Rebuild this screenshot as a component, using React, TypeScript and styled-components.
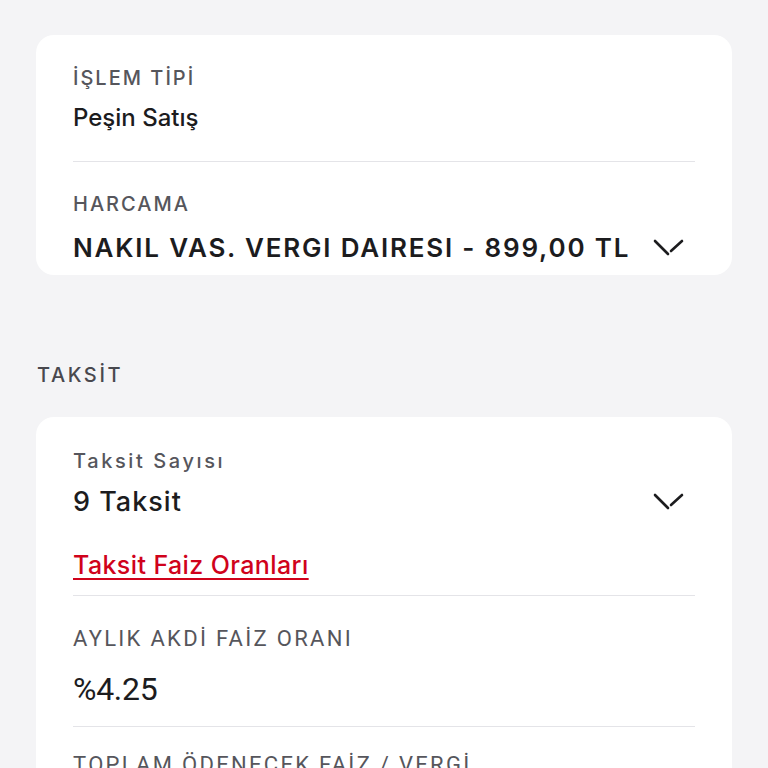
import styled, { createGlobalStyle } from "styled-components"

const GlobalStyle = createGlobalStyle`
  html, body { margin: 0; padding: 0; background: #f4f4f6; }
  body { font-family: Inter, "Open Sans", sans-serif; color: #1c1c1e; }
`

// Styles
const Page = styled.div`
  padding: 35px 36px 0;
  height: 768px;
  box-sizing: border-box;
  overflow: hidden;
`
const Card = styled.div`
  background: #fff;
  border-radius: 18px;
  padding: 0 37px;
`
const Field = styled.div<{ $pad: string }>`
  padding: ${p => p.$pad};
`
const Label = styled.div<{ $spacing?: number }>`
  font-size: 20px;
  line-height: 24px;
  font-weight: 500;
  color: #56565c;
  letter-spacing: ${p => p.$spacing ?? 2}px;
`
const NumLabel = styled.div`
  font-family: Roboto, sans-serif;
  font-size: 22px;
  line-height: 26px;
  color: #56565c;
  letter-spacing: 2.3px;
`
const ValueRow = styled.div<{ $gap: number }>`
  display: flex;
  align-items: center;
  justify-content: space-between;
  margin-top: ${p => p.$gap}px;
`
const Value = styled.div<{ $size: number; $weight?: number; $spacing?: number }>`
  font-size: ${p => p.$size}px;
  line-height: ${p => p.$size + 6}px;
  font-weight: ${p => p.$weight ?? 500};
  letter-spacing: ${p => p.$spacing ?? 0}px;
  color: #1c1c1e;
  white-space: nowrap;
`
const NumValue = styled.div`
  font-family: Roboto, sans-serif;
  font-size: 32px;
  line-height: 36px;
  letter-spacing: -0.3px;
  color: #1c1c1e;
  margin-top: 19px;
`
const Divider = styled.hr`
  border: none;
  border-top: 1.5px solid #e4e4e8;
  margin: 0;
`
const Section = styled.div`
  font-size: 20px;
  line-height: 24px;
  font-weight: 500;
  letter-spacing: 2.6px;
  color: #48484e;
  margin-left: 1px;
  padding: 88px 0 30px;
`
const Link = styled.a`
  display: block;
  width: max-content;
  margin-top: 32px;
  font-size: 25px;
  line-height: 30px;
  font-weight: 500;
  letter-spacing: 0.4px;
  color: #d0021b;
  text-decoration: underline;
  text-underline-offset: 4px;
  text-decoration-thickness: 2px;
`
const Chevron = styled.svg`
  flex: none;
  margin-right: 10px;
`

const ChevronDown = () => (
  <Chevron width="32" height="18" viewBox="0 0 32 18">
    <g stroke="#1c1c1e" strokeWidth="2.6" strokeLinecap="round" fill="none">
      <line x1="2" y1="2" x2="15" y2="15" />
      <line x1="18" y1="12" x2="29" y2="2" />
    </g>
  </Chevron>
)

const App: React.FC = () => {
  return (
    <>
      <GlobalStyle />
      <Page>
        <Card>
          <Field $pad="31px 0 28px">
            <Label>İŞLEM TİPİ</Label>
            <ValueRow $gap={13}><Value $size={24} $weight={550}>Peşin Satış</Value></ValueRow>
          </Field>
          <Divider />
          <Field $pad="30px 0 11px">
            <Label>HARCAMA</Label>
            <ValueRow $gap={16}>
              <Value $size={26} $weight={580} $spacing={1.8}>NAKIL VAS. VERGI DAIRESI - 899,00 TL</Value>
              <ChevronDown />
            </ValueRow>
          </Field>
        </Card>

        <Section>TAKSİT</Section>

        <Card>
          <Field $pad="32px 0 15px">
            <Label $spacing={2.6}>Taksit Sayısı</Label>
            <ValueRow $gap={12}>
              <Value $size={27} $spacing={1}>9 Taksit</Value>
              <ChevronDown />
            </ValueRow>
            <Link>Taksit Faiz Oranları</Link>
          </Field>
          <Divider />
          <Field $pad="30px 0 19px">
            <NumLabel>AYLIK AKDİ FAİZ ORANI</NumLabel>
            <NumValue>%4.25</NumValue>
          </Field>
          <Divider />
          <Field $pad="25px 0 24px">
            <NumLabel>TOPLAM ÖDENECEK FAİZ / VERGİ</NumLabel>
          </Field>
        </Card>
      </Page>
    </>
  )
}

export default App
